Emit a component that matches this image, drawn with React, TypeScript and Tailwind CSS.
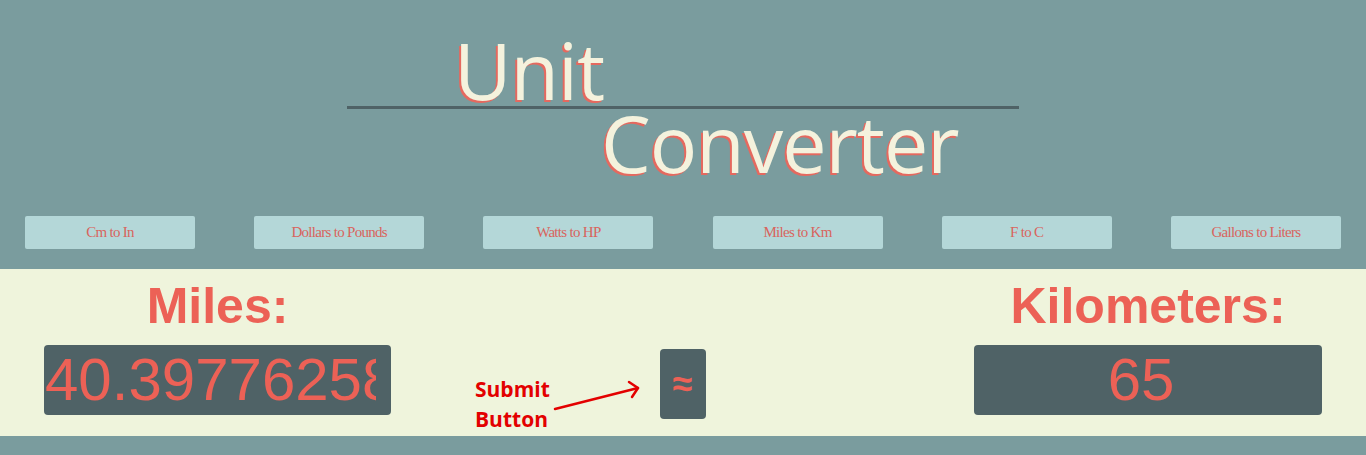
import React from 'react';

const conversions = ['Cm to In', 'Dollars to Pounds', 'Watts to HP', 'Miles to Km', 'F to C', 'Gallons to Liters'];

export default function App() {
  return (
    <div className="min-h-[455px] w-full bg-[#7a9c9e] pb-[19px]">
      {/* title */}
      <div className="mx-auto w-[672px] pt-[33px] font-['Open_Sans',sans-serif] text-[79px] text-[#f4f2dd] [text-shadow:-2px_2px_0_#e5695f]">
        <div className="pl-[107px] leading-[73px] tracking-[-1px]">Unit</div>
        <div className="h-[3px] bg-[#4f6266]" />
        <div className="mt-[2px] pl-[254px] leading-[63px] tracking-[-1px]">Converter</div>
      </div>

      {/* conversion choices */}
      <div className="mt-[42px] flex justify-between px-[25px] pb-[20px]">
        {conversions.map((c) => (
          <button
            key={c}
            className="flex h-[33px] w-[170px] items-center justify-center rounded-[2px] bg-[#b4d7d8] font-['Liberation_Serif',serif] text-[15px] tracking-[-0.7px] text-[#d9645d]"
          >
            {c}
          </button>
        ))}
      </div>

      {/* converter panel */}
      <div className="relative flex h-[167px] justify-between bg-[#eff4dc] px-[44px] pt-[12px] font-['Liberation_Sans',Arial,sans-serif]">
        <div className="flex w-[347px] flex-col items-center">
          <div className="text-[50px] font-bold leading-[50px] text-[#ec6156]">Miles:</div>
          <input
            readOnly
            value="40.3977625857"
            className="mt-[14px] h-[70px] w-full rounded-[4px] bg-[#4f6266] pl-[1px] pr-[15px] text-center text-[60px] text-[#ec6156] outline-none"
          />
        </div>

        <button className="mt-[68px] flex h-[70px] w-[46px] items-center justify-center rounded-[4px] bg-[#4f6266] text-[36px] font-bold leading-none text-[#ec6156]">
          ≈
        </button>

        <div className="flex w-[348px] flex-col items-center">
          <div className="text-[50px] font-bold leading-[50px] text-[#ec6156]">Kilometers:</div>
          <input
            readOnly
            value="65"
            className="mt-[14px] h-[70px] w-full rounded-[4px] bg-[#4f6266] pl-[1px] pr-[15px] text-center text-[60px] text-[#ec6156] outline-none"
          />
        </div>

        {/* annotation */}
        <div className="absolute left-[475px] top-[105px] font-['Open_Sans',sans-serif] text-[21px] font-bold leading-[30px] text-[#e30000]">
          <div>Submit</div>
          <div>Button</div>
        </div>
        <svg className="absolute left-[550px] top-[110px]" width="95" height="35" viewBox="550 379 95 35">
          <path d="M555 409 L638 388" stroke="#e30000" strokeWidth="2.5" fill="none" strokeLinecap="round" />
          <path d="M629 382 L638 388 L632 397" stroke="#e30000" strokeWidth="2.5" fill="none" strokeLinecap="round" strokeLinejoin="round" />
        </svg>
      </div>
    </div>
  );
}
